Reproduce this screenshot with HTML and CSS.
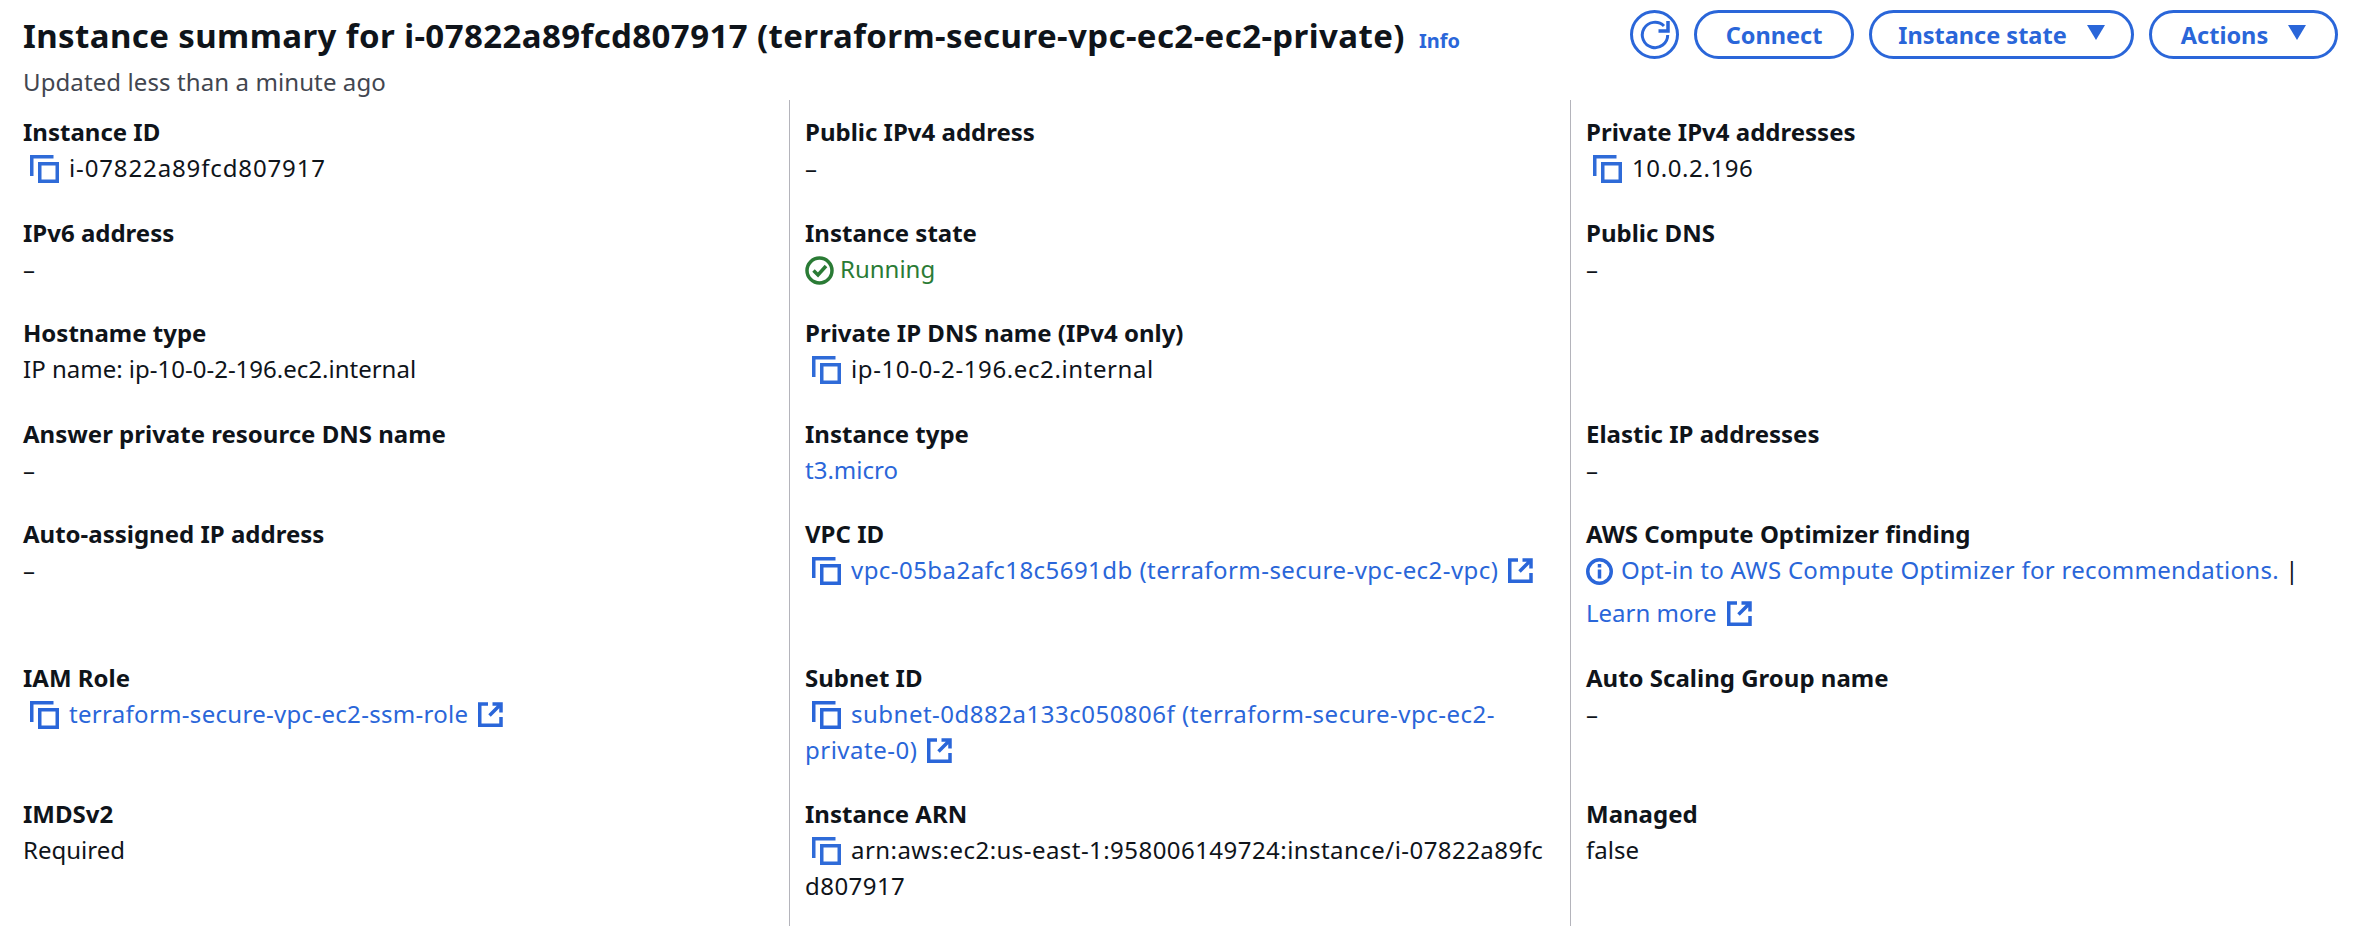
FILE: index.html
```
<!DOCTYPE html>
<html lang="en">
<head>
<meta charset="utf-8">
<title>Instance summary</title>
<link rel="stylesheet" href="styles.css">
</head>
<body>
<svg class="defs" width="0" height="0" aria-hidden="true">
  <symbol id="copy" viewBox="0 0 29 28"><path d="M23.5 1.75H1.75V21" fill="none" stroke="currentColor" stroke-width="3.5"/><rect x="9.75" y="8.75" width="17.5" height="17.5" fill="none" stroke="currentColor" stroke-width="3.5"/></symbol>
  <symbol id="ext" viewBox="0 0 25 25"><path d="M10 2H1.75v21.25H23V15M14.5 2H23v8.5M22.5 2.5 11.5 13.5" fill="none" stroke="currentColor" stroke-width="3.5"/></symbol>
</svg>
<header class="head">
  <div>
    <div class="title-row"><h1 class="title">Instance summary for i-07822a89fcd807917 (terraform-secure-vpc-ec2-ec2-private)</h1><a class="info">Info</a></div>
    <p class="updated">Updated less than a minute ago</p>
  </div>
  <div class="actions">
    <button class="btn round"><svg class="refresh" viewBox="0 0 30 30"><path d="M24 6A12.7 12.7 0 1 0 27.7 15" fill="none" stroke="currentColor" stroke-width="3"/><path d="M28 1v10H18.5" fill="none" stroke="currentColor" stroke-width="3.5"/></svg></button>
    <button class="btn connect">Connect</button>
    <button class="btn state">Instance state<span class="caret"></span></button>
    <button class="btn act">Actions<span class="caret"></span></button>
  </div>
</header>
<main class="grid">
  <div class="cell"><div class="label">Instance ID</div><div class="val ls-l"><svg class="ic copy"><use href="#copy"/></svg>i-07822a89fcd807917</div></div>
  <div class="cell"><div class="label">Public IPv4 address</div><div class="val">–</div></div>
  <div class="cell"><div class="label">Private IPv4 addresses</div><div class="val ls-m"><svg class="ic copy"><use href="#copy"/></svg>10.0.2.196</div></div>

  <div class="cell"><div class="label">IPv6 address</div><div class="val">–</div></div>
  <div class="cell"><div class="label">Instance state</div><div class="val ok"><svg class="ic check" viewBox="0 0 29 29"><circle cx="14.5" cy="14.5" r="12.5" fill="none" stroke="currentColor" stroke-width="3.5"/><path d="M8.5 14.5l4.5 4.5 8-9" fill="none" stroke="currentColor" stroke-width="3.5"/></svg>Running</div></div>
  <div class="cell"><div class="label">Public DNS</div><div class="val">–</div></div>

  <div class="cell"><div class="label">Hostname type</div><div class="val">IP name: ip-10-0-2-196.ec2.internal</div></div>
  <div class="cell"><div class="label">Private IP DNS name (IPv4 only)</div><div class="val ls-m"><svg class="ic copy"><use href="#copy"/></svg>ip-10-0-2-196.ec2.internal</div></div>
  <div class="cell"></div>

  <div class="cell"><div class="label">Answer private resource DNS name</div><div class="val">–</div></div>
  <div class="cell"><div class="label">Instance type</div><div class="val link">t3.micro</div></div>
  <div class="cell"><div class="label">Elastic IP addresses</div><div class="val">–</div></div>

  <div class="cell"><div class="label">Auto-assigned IP address</div><div class="val">–</div></div>
  <div class="cell"><div class="label">VPC ID</div><div class="val link ls-s"><svg class="ic copy"><use href="#copy"/></svg>vpc-05ba2afc18c5691db (terraform-secure-vpc-ec2-vpc)<svg class="ic ext"><use href="#ext"/></svg></div></div>
  <div class="cell"><div class="label">AWS Compute Optimizer finding</div><div class="val opt"><span class="link ls-xs"><svg class="ic inf" viewBox="0 0 27 27"><circle cx="13.5" cy="13.5" r="11.75" fill="none" stroke="currentColor" stroke-width="3.5"/><path d="M13.5 11.5v9M13.5 6v3.5" fill="none" stroke="currentColor" stroke-width="3.5"/></svg>Opt-in to AWS Compute Optimizer for recommendations.</span> | <br><span class="link">Learn more<svg class="ic ext"><use href="#ext"/></svg></span></div></div>

  <div class="cell"><div class="label">IAM Role</div><div class="val link ls-xs"><svg class="ic copy"><use href="#copy"/></svg>terraform-secure-vpc-ec2-ssm-role<svg class="ic ext"><use href="#ext"/></svg></div></div>
  <div class="cell"><div class="label">Subnet ID</div><div class="val link ls-s2"><svg class="ic copy"><use href="#copy"/></svg>subnet-0d882a133c050806f (terraform-secure-vpc-ec2-private-0)<svg class="ic ext"><use href="#ext"/></svg></div></div>
  <div class="cell"><div class="label">Auto Scaling Group name</div><div class="val">–</div></div>

  <div class="cell"><div class="label">IMDSv2</div><div class="val">Required</div></div>
  <div class="cell"><div class="label">Instance ARN</div><div class="val arn ls-s"><svg class="ic copy"><use href="#copy"/></svg>arn:aws:ec2:us-east-1:958006149724:instance/i-07822a89fcd807917</div></div>
  <div class="cell"><div class="label">Managed</div><div class="val">false</div></div>
</main>
</body>
</html>
```
FILE: styles.css
```
* { box-sizing: border-box; }
html, body { margin: 0; height: 926px; overflow: hidden; background: #fff; }
body { font-family: "Noto Sans", "Open Sans", sans-serif; font-size: 24px; line-height: 36px; color: #0f141a; }
.defs { position: absolute; }
.head { display: flex; justify-content: space-between; height: 100px; padding: 10px 34px 0 23px; }
.title-row { display: flex; align-items: baseline; gap: 14px; height: 50px; padding-top: 7px; }
.title { margin: 0; font-size: 33px; line-height: 38px; font-weight: 700; letter-spacing: .4px; white-space: nowrap; }
.info { font-size: 20px; font-weight: 700; color: #2a66d9; }
.updated { margin: 4px 0 0; color: #424650; line-height: 36px; letter-spacing: .1px; }
.actions { display: flex; gap: 15px; height: 49px; }
.btn { display: flex; align-items: center; justify-content: center; height: 49px; background: #fff; border: 3px solid #2a66d9; border-radius: 25px; color: #2a66d9; font: 700 23.5px/36px "Noto Sans", sans-serif; padding: 0; }
.round { width: 49px; }
.refresh { width: 30px; height: 30px; }
.connect { width: 160px; }
.state { width: 265px; }
.act { width: 189px; }
.caret { width: 0; height: 0; margin-left: 20px; margin-top: -4px; border-left: 9px solid transparent; border-right: 9px solid transparent; border-top: 15px solid #2a66d9; }
.grid { display: grid; grid-template-columns: 789px 781px 1fr; grid-template-rows: repeat(6, auto) 1fr; height: 826px; }
.cell { padding: 14px 15px 14.5px; min-height: 100.5px; }
.cell:nth-child(3n+1) { padding-left: 23px; }
.cell:nth-child(3n+2), .cell:nth-child(3n) { border-left: 1px solid #b4b4bb; }
.label { font-weight: 700; }
.val { overflow-wrap: anywhere; }
.link, .link .ic { color: #2a66d9; }
.ok { color: #2a7b35; }
.arn { word-break: break-all; }
.ls-xs { letter-spacing: .3px; }
.ls-s { letter-spacing: .45px; }
.ls-s2 { letter-spacing: .5px; }
.ls-m { letter-spacing: .6px; }
.ls-l { letter-spacing: .87px; }
.opt { line-height: 43px; margin: -4px 0 -3px; }
.ic { display: inline-block; vertical-align: -5px; }
.copy { width: 29px; height: 28px; margin: 0 10px 0 7px; color: #2f6bd8; vertical-align: -6px; }
.ext { width: 25px; height: 25px; margin-left: 10px; vertical-align: -4px; }
.check { width: 29px; height: 29px; margin-right: 6px; vertical-align: -7px; }
.inf { width: 27px; height: 27px; margin-right: 8px; vertical-align: -6px; }
```
